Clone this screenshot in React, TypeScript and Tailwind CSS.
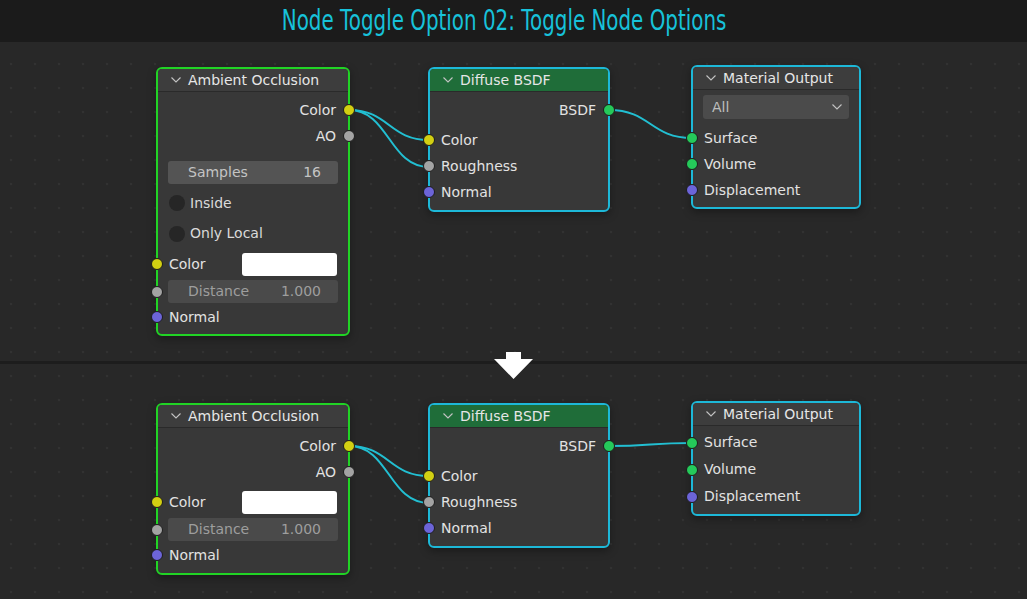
import clsx from "clsx";
import type { ReactNode } from "react";

type SocketKind = "yellow" | "gray" | "purple" | "green";

const socketBg: Record<SocketKind, string> = {
  yellow: "bg-[#d2cf12]",
  gray: "bg-[#a3a3a3]",
  purple: "bg-[#6c64d8]",
  green: "bg-[#25c95a]",
};

function Socket({ kind, side }: { kind: SocketKind; side: "left" | "right" }) {
  return (
    <span
      className={clsx(
        "absolute top-1/2 h-3 w-3 -translate-y-1/2 rounded-full border border-[#1c1c1c]",
        socketBg[kind],
        side === "left" ? "left-[-7px]" : "right-[-7px]"
      )}
    />
  );
}

function Chevron() {
  return (
    <svg width="10" height="6" viewBox="0 0 10 6" className="shrink-0">
      <polyline points="0.5,0.5 5,5 9.5,0.5" fill="none" stroke="#c4c4c4" strokeWidth="1.1" />
    </svg>
  );
}

function Node({
  title,
  border,
  header,
  className,
  children,
}: {
  title: string;
  border: string;
  header: string;
  className: string;
  children: ReactNode;
}) {
  return (
    <div
      className={clsx(
        "absolute rounded-[6px] border-2 bg-[#383838] shadow-[0_3px_8px_rgba(0,0,0,0.35)]",
        border,
        className
      )}
    >
      <div
        className={clsx(
          "flex h-[23px] items-center gap-[7px] rounded-t-[4px] border-b border-[#2a2a2a] pl-[13px] text-[#e6e6e6]",
          header
        )}
      >
        <Chevron />
        <span>{title}</span>
      </div>
      {children}
    </div>
  );
}

function OutRow({ label, kind, h = "h-[26px]" }: { label: string; kind: SocketKind; h?: string }) {
  return (
    <div className={clsx("relative flex items-center justify-end pr-[12px]", h)}>
      <span>{label}</span>
      <Socket kind={kind} side="right" />
    </div>
  );
}

function InRow({ label, kind, h = "h-[26px]", className }: { label: string; kind: SocketKind; h?: string; className?: string }) {
  return (
    <div className={clsx("relative flex items-center pl-[11px]", h, className)}>
      <Socket kind={kind} side="left" />
      <span>{label}</span>
    </div>
  );
}

function Field({ label, value, tone }: { label: string; value: string; tone: "bright" | "dim" }) {
  return (
    <div
      className={clsx(
        "mx-[10px] flex h-[23px] items-center justify-between rounded-[3px] pl-[20px] pr-[17px]",
        tone === "bright" ? "bg-[#545454] text-[#c4c4c4]" : "bg-[#4a4a4a] text-[#9e9e9e]"
      )}
    >
      <span>{label}</span>
      <span>{value}</span>
    </div>
  );
}

function ColorInput({ className }: { className?: string }) {
  return (
    <div className={clsx("relative flex h-[26px] items-center justify-between pl-[11px] pr-[11px]", className)}>
      <Socket kind="yellow" side="left" />
      <span>Color</span>
      <span className="h-[23px] w-[95px] rounded-[3px] bg-white" />
    </div>
  );
}

function Check({ label, h }: { label: string; h: string }) {
  return (
    <div className={clsx("flex items-center gap-[5px] pl-[11px] text-[#dadada]", h)}>
      <span className="h-4 w-4 rounded-full bg-[#262626]" />
      <span>{label}</span>
    </div>
  );
}

function DistanceRow({ className }: { className?: string }) {
  return (
    <div className={clsx("relative", className)}>
      <Socket kind="gray" side="left" />
      <Field label="Distance" value="1.000" tone="dim" />
    </div>
  );
}

function Wire({ x1, y1, x2, y2 }: { x1: number; y1: number; x2: number; y2: number }) {
  const d = Math.max(30, (x2 - x1) * 0.5);
  return (
    <path
      d={`M${x1} ${y1} C${x1 + d} ${y1} ${x2 - d} ${y2} ${x2} ${y2}`}
      fill="none"
      stroke="#22bfd2"
      strokeWidth="2"
    />
  );
}

const grid =
  "relative bg-[image:radial-gradient(circle,#323232_1px,transparent_1.6px)] bg-[size:24px_24px]";

export default function App() {
  return (
    <div className="relative flex h-[599px] w-[1027px] flex-col overflow-hidden bg-[#282828] font-['DejaVu_Sans',sans-serif] text-[14px] text-[#e2e2e2]">
      <div className="flex h-[42px] shrink-0 items-center justify-center bg-[#1b1b1b] pr-[18px]">
        <h1 className="origin-center scale-x-[0.71] whitespace-nowrap font-['DejaVu_Sans',sans-serif] text-[28px] leading-none text-[#17c2da]">
          Node Toggle Option 02: Toggle Node Options
        </h1>
      </div>

      {/* before: all node options shown */}
      <section className={clsx(grid, "h-[319px] shrink-0 bg-[position:-1px_10px]")}>
        <svg className="pointer-events-none absolute inset-0 h-full w-full">
          <Wire x1={349} y1={68} x2={429} y2={98} />
          <Wire x1={349} y1={68} x2={429} y2={125} />
          <Wire x1={609} y1={68} x2={692} y2={96} />
        </svg>

        <Node title="Ambient Occlusion" border="border-[#21d325]" header="bg-[#3d3d3d]" className="left-[156px] top-[25px] w-[194px] pb-[4px]">
          <div className="pt-[5px]">
            <OutRow label="Color" kind="yellow" />
            <OutRow label="AO" kind="gray" />
          </div>
          <div className="mt-[12px]">
            <Field label="Samples" value="16" tone="bright" />
          </div>
          <Check label="Inside" h="mt-[4px] h-[30px]" />
          <Check label="Only Local" h="h-[31px]" />
          <ColorInput className="mt-[2px]" />
          <DistanceRow className="mt-[3px]" />
          <InRow label="Normal" kind="purple" className="mt-[1px]" />
        </Node>

        <Node title="Diffuse BSDF" border="border-[#1db8d8]" header="bg-[#1f6d39]" className="left-[428px] top-[25px] w-[182px] pb-[5px]">
          <div className="pt-[5px]">
            <OutRow label="BSDF" kind="green" />
          </div>
          <div className="mt-[4px]">
            <InRow label="Color" kind="yellow" />
            <InRow label="Roughness" kind="gray" />
            <InRow label="Normal" kind="purple" />
          </div>
        </Node>

        <Node title="Material Output" border="border-[#1db8d8]" header="bg-[#3d3d3d]" className="left-[691px] top-[23px] w-[170px] pb-[4px]">
          <div className="mx-[10px] mt-[5px] flex h-[24px] items-center justify-between rounded-[3px] bg-[#4b4b4b] pl-[9px] pr-[7px] text-[#bdbdbd]">
            <span>All</span>
            <Chevron />
          </div>
          <div className="mt-[6px]">
            <InRow label="Surface" kind="green" />
            <InRow label="Volume" kind="green" />
            <InRow label="Displacement" kind="purple" />
          </div>
        </Node>
      </section>

      <div className="h-[3px] shrink-0 bg-[#1d1d1d]" />

      {/* after: options hidden */}
      <section className={clsx(grid, "flex-1 bg-[position:-1px_0px]")}>
        <svg className="pointer-events-none absolute inset-0 h-full w-full">
          <Wire x1={349} y1={82} x2={429} y2={112} />
          <Wire x1={349} y1={82} x2={429} y2={139} />
          <Wire x1={609} y1={82} x2={692} y2={79} />
        </svg>

        <Node title="Ambient Occlusion" border="border-[#21d325]" header="bg-[#3d3d3d]" className="left-[156px] top-[39px] w-[194px] pb-[5px]">
          <div className="pt-[5px]">
            <OutRow label="Color" kind="yellow" />
            <OutRow label="AO" kind="gray" />
          </div>
          <ColorInput className="mt-[4px]" />
          <DistanceRow className="mt-[3px]" />
          <InRow label="Normal" kind="purple" className="mt-[1px]" />
        </Node>

        <Node title="Diffuse BSDF" border="border-[#1db8d8]" header="bg-[#1f6d39]" className="left-[428px] top-[39px] w-[182px] pb-[5px]">
          <div className="pt-[5px]">
            <OutRow label="BSDF" kind="green" />
          </div>
          <div className="mt-[4px]">
            <InRow label="Color" kind="yellow" />
            <InRow label="Roughness" kind="gray" />
            <InRow label="Normal" kind="purple" />
          </div>
        </Node>

        <Node title="Material Output" border="border-[#1db8d8]" header="bg-[#3d3d3d]" className="left-[691px] top-[37px] w-[170px] pb-[4px]">
          <div className="pt-[3px]">
            <InRow label="Surface" kind="green" h="h-[27px]" />
            <InRow label="Volume" kind="green" h="h-[27px]" />
            <InRow label="Displacement" kind="purple" h="h-[27px]" />
          </div>
        </Node>
      </section>

      {/* down arrow over the divider */}
      <svg width="40" height="29" viewBox="0 0 40 29" className="absolute left-[494px] top-[351px]">
        <polygon points="12,1 27,1 27,8 39,8 19.5,28 0,8 12,8" fill="#ffffff" />
      </svg>
    </div>
  );
}
